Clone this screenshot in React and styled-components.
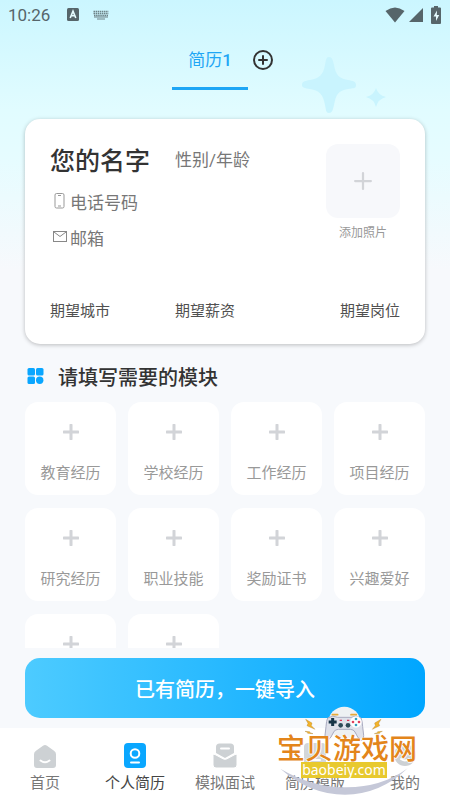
import React, { useState } from 'react';
import styled, { createGlobalStyle } from 'styled-components'

const GlobalStyle = createGlobalStyle`
  * {
    box-sizing: border-box;
  }

  body {
    margin: 0;
    font-family: Roboto, "Noto Sans CJK SC", sans-serif;
    color: #333;
  }

  button {
    padding: 0;
    border: 0;
    background: none;
    font: inherit;
    color: inherit;
    cursor: pointer;
  }

  svg {
    display: block;
    flex: none;
  }
`

const Screen = styled.div`
  position: relative;
  display: flex;
  flex-direction: column;
  height: 100vh;
  overflow: hidden;
  background: #f7f9fc linear-gradient(#cbf6ff 0, #e1fcff 110px, #e6fcff 160px, #f7f9fc 270px) no-repeat;
`

const Sparkles = styled.svg`
  position: absolute;
  top: 57px;
  right: 64px;
`

const StatusBar = styled.div`
  display: flex;
  align-items: center;
  height: 30px;
  padding: 0 8px;
  color: #56656a;
`

const Clock = styled.time`
  margin-right: 17px;
  font-size: 17px;
  line-height: 30px;
`

const StatusIcons = styled.div`
  display: flex;
  align-items: center;
  gap: ${props => props.$gap}px;
  margin-left: ${props => props.$end ? 'auto' : 0};
`

const Tabs = styled.header`
  position: relative;
  display: flex;
  justify-content: center;
  height: 60px;
`

const Tab = styled.button`
  width: 76px;
  border-bottom: 3px solid #1ea6f5;
  color: #1ea6f5;
  font-size: 17px;

  b {
    font-weight: 500;
  }
`

const AddTab = styled.button`
  display: flex;
  align-items: center;
  padding: 0 4px;
  color: #333;
`

const Content = styled.main`
  position: relative;
  flex: 1;
  min-height: 0;
  overflow: hidden;
  padding: 29px 25px 0;
`

const Card = styled.section`
  display: flex;
  flex-direction: column;
  justify-content: space-between;
  min-height: 225px;
  padding: 25px 25px 23px;
  border-radius: 15px;
  background: #fff;
  box-shadow: 0 1px 4px rgba(0, 0, 0, 0.25);
`

const CardTop = styled.div`
  display: flex;
  justify-content: space-between;
`

const NameRow = styled.div`
  display: flex;
  align-items: flex-start;
  height: 39px;
`

const Name = styled.h1`
  width: 125px;
  margin: 0;
  font-size: 25px;
  font-weight: 500;
  line-height: 36px;
`

const Muted = styled.span`
  color: #777;
  font-size: 17px;
  line-height: 32px;
`

const Contact = styled.div`
  display: flex;
  align-items: center;
  gap: 3px;
  height: 36px;
  color: #777;
  font-size: 17px;
`

const PhotoButton = styled.button`
  display: flex;
  flex-direction: column;
  align-items: center;
  gap: 6px;
  width: 74px;
  color: #999;
  font-size: 12px;
  line-height: 18px;
`

const PhotoBox = styled.span`
  display: grid;
  place-items: center;
  width: 100%;
  height: 74px;
  border-radius: 12px;
  background: #f7f8fb;
`

const Wishes = styled.div`
  display: flex;
  color: #505050;
  font-size: 15px;
  line-height: 20px;

  span {
    width: 125px;
  }

  span:last-child {
    width: auto;
    margin-left: auto;
  }
`

const SectionTitle = styled.h2`
  display: flex;
  align-items: center;
  gap: 14px;
  height: 58px;
  margin: 0;
  padding: 6px 2px 0;
  font-size: 20px;
  font-weight: 500;
`

const Modules = styled.div`
  display: grid;
  grid-template-columns: repeat(4, 1fr);
  gap: 13px 12px;
`

const Module = styled.button`
  display: flex;
  flex-direction: column;
  align-items: center;
  gap: 22px;
  height: 93px;
  padding-top: 22px;
  border-radius: 13px;
  background: #fff;
  color: #999;
  font-size: 15px;
  line-height: 22px;
`

const ImportButton = styled.button`
  height: 60px;
  margin: 10px 25px;
  border-radius: 15px;
  background: linear-gradient(90deg, #4dcbff, #00a6ff);
  color: #fff;
  font-size: 20px;
  font-weight: 500;
`

const BottomNav = styled.nav`
  display: grid;
  grid-template-columns: repeat(5, 1fr);
  height: 72px;
  padding-top: 14px;
  background: #fff;
`

const NavLink = styled.a`
  display: flex;
  flex-direction: column;
  align-items: center;
  gap: 4px;
  color: ${props => props.$active ? '#444' : '#777'};
  font-size: 15px;
  line-height: 22px;
  text-decoration: none;
`

const Watermark = styled.div`
  position: absolute;
  right: 33px;
  bottom: 4px;
  width: 140px;
  height: 90px;
  pointer-events: none;

  svg {
    position: absolute;
    inset: 0;
  }
`

const SiteName = styled.div`
  position: relative;
  padding-top: 28px;
  color: #e3851b;
  font-size: 28px;
  font-weight: 500;
  line-height: 32px;
  white-space: nowrap;
  text-shadow: 1px 0 #fff, -1px 0 #fff, 0 1px #fff;
`

const SiteUrl = styled.div`
  position: relative;
  width: 86px;
  margin: -4px 0 0 24px;
  background: #e8c92e;
  color: #fff;
  font-family: "Noto Sans", sans-serif;
  font-size: 14px;
  line-height: 16px;
  text-align: center;
`

const modules = [
  '教育经历', '学校经历', '工作经历', '项目经历',
  '研究经历', '职业技能', '奖励证书', '兴趣爱好',
  '', '',
]

function Plus({ size = 16, width = 3 }) {
  return (
    <svg width={size} height={size} viewBox="0 0 16 16" stroke="#d2d4d8" strokeWidth={width} strokeLinecap="round">
      <path d="M8 1v14M1 8h14" />
    </svg>
  )
}

function HomeIcon() {
  return (
    <svg width="24" height="26" viewBox="0 0 24 26">
      <path d="M10 3.800q2-1.400 4 0l7 5q2 1.400 2 3.400V23q0 3-3 3H4q-3 0-3-3V12.200q0-2 2-3.400z" fill="#cdd1d4" />
      <path d="M7.500 18.500q4.500 3.500 9 0" fill="none" stroke="#fff" strokeWidth="2" strokeLinecap="round" />
    </svg>
  )
}

function ResumeIcon() {
  return (
    <svg width="24" height="26" viewBox="0 0 24 26">
      <rect x="1" y="1" width="22" height="25" rx="4" fill="#0aa7ff" />
      <circle cx="12" cy="11.500" r="4.300" fill="none" stroke="#fff" strokeWidth="2" />
      <path d="M8 20.500h8" stroke="#fff" strokeWidth="2" strokeLinecap="round" />
    </svg>
  )
}

function InterviewIcon() {
  return (
    <svg width="24" height="26" viewBox="0 0 24 26" fill="#cdd1d4">
      <path d="M3 11V5q0-3.500 3.500-3.500h11Q21 1.500 21 5v6l-9 5z" />
      <path d="M0 13.500q0-2 2-1l8 4.300q2 1 4 0l8-4.300q2-1 2 1V23q0 3-3 3H3q-3 0-3-3z" stroke="#fff" strokeWidth="1" />
      <path d="M8 6.500h8" stroke="#fff" strokeWidth="2" strokeLinecap="round" />
    </svg>
  )
}

function TemplateIcon() {
  return (
    <svg width="24" height="26" viewBox="0 0 24 26">
      <rect x="1" y="1" width="22" height="24" rx="4" fill="#d3d6d9" />
      <path d="M7 18h10" stroke="#fff" strokeWidth="2" strokeLinecap="round" />
    </svg>
  )
}

function MineIcon() {
  return (
    <svg width="24" height="26" viewBox="0 0 24 26">
      <circle cx="12" cy="13" r="11" fill="#cdd1d4" />
      <path d="M8 17q4 3 8 0" fill="none" stroke="#fff" strokeWidth="2" strokeLinecap="round" />
    </svg>
  )
}

const navItems = [
  { label: '首页', icon: HomeIcon },
  { label: '个人简历', icon: ResumeIcon },
  { label: '模拟面试', icon: InterviewIcon },
  { label: '简历模版', icon: TemplateIcon },
  { label: '我的', icon: MineIcon },
]

function Status() {
  return (
    <StatusBar>
      <Clock>10:26</Clock>
      <StatusIcons $gap={14}>
        <svg width="12" height="14" viewBox="0 0 12 14">
          <rect width="12" height="13" rx="1.500" fill="currentColor" />
          <path d="M3.200 10L6 3.200 8.800 10M4.300 7.800h3.400" fill="none" stroke="#e6fcff" strokeWidth="1.600" />
        </svg>
        <svg width="16" height="10" viewBox="0 0 16 10" stroke="currentColor" fill="none" opacity="0.8">
          <path d="M0.500 1.500h15M0.500 3.500h15M1 5.500h14" strokeWidth="1.500" strokeDasharray="1.500 0.600" />
          <path d="M1 7h14M4 9h8" strokeWidth="1" />
        </svg>
      </StatusIcons>
      <StatusIcons $gap={4} $end>
        <svg width="20" height="16" viewBox="0 0 20 16" fill="currentColor">
          <path d="M0.500 4Q10-3 19.500 4L10 15.500z" />
        </svg>
        <svg width="14" height="14" viewBox="0 0 14 14" fill="currentColor">
          <path d="M14 0v14H0z" />
        </svg>
        <svg width="15" height="18" viewBox="-4 0 15 18">
          <path d="M3 1.500V0h4v1.500h2q1 0 1 1V17q0 1-1 1H1q-1 0-1-1V2.500q0-1 1-1z" fill="currentColor" />
          <path d="M6 4.500L2.500 10.500H5V15l3.200-6H5.800z" fill="#e6fcff" />
        </svg>
      </StatusIcons>
    </StatusBar>
  )
}

function Gamepad() {
  return (
    <svg width="140" height="90" viewBox="36 18 420 270">
      <path d="M46 206Q135 284 240 284T428 205Q350 262 245 262T46 206z" fill="#c5c8d8" />
      <circle cx="238" cy="68" r="48" fill="#eef1f3" />
      <path d="M202 44h16M258 44h16" stroke="#e5a93a" strokeWidth="5" strokeLinecap="round" />
      <path d="M188 54Q204 44 218 52H258Q272 44 288 54Q292 62 293 80L296 106Q296 124 286 120Q278 114 270 96Q266 88 256 88H220Q210 88 206 96Q198 114 190 120Q180 124 180 106L183 80Q184 62 188 54z" fill="#dfe1ea" stroke="#a9abc0" strokeWidth="3" />
      <path d="M203 54v24M191 66h24" stroke="#163447" strokeWidth="9" />
      <circle cx="227" cy="76" r="7" fill="#2c4a58" />
      <circle cx="249" cy="76" r="7" fill="#2c4a58" />
      <path d="M224 61h7M246 61h7" stroke="#dc3656" strokeWidth="4" />
      <circle cx="273" cy="66" r="17" fill="#fff" />
      <circle cx="273" cy="57" r="4" fill="#34a0bf" />
      <circle cx="264" cy="66" r="4" fill="#e0405c" />
      <circle cx="282" cy="66" r="4" fill="#e0405c" />
      <circle cx="273" cy="75" r="4" fill="#34a0bf" />
      <g fill="#f3b32a" stroke="#a57725">
        <path d="M122 58l19 11-2 8 11 11-24-11 3-7z" />
        <path d="M348 58l-19 11 2 8-9 11 22-11-3-7z" />
        <path d="M120 94l14 1 1 3 9 3-16-1-1-3z" />
        <path d="M352 94l-14 1-1 3-9 3 16-1 1-3z" />
      </g>
    </svg>
  )
}

export default function App() {
  const [active, setActive] = useState(1)

  return (
    <Screen>
      <GlobalStyle />
      <Sparkles width="86" height="56" viewBox="0 0 86 56" fill="#c9f4fe" aria-hidden="true">
        <path d="M2 28C2 24 5 24 10 23C20 21 23 18 25 8C26 3 26 0 29 0S33 3 34 8C36 18 38 21 48 23C53 24 56 24 56 28S53 31 48 32C38 34 36 37 34 48C33 53 32 56 29 56S26 53 25 48C23 37 20 34 10 32C5 31 2 31 2 28z" />
        <path d="M76 31Q78 38 86 40Q78 42 76 50Q74 42 66 40Q74 38 76 31z" />
      </Sparkles>
      <Status />
      <Tabs>
        <Tab>简历<b>1</b></Tab>
        <AddTab aria-label="新建简历">
          <svg width="22" height="22" viewBox="0 0 22 22" fill="none" stroke="currentColor" strokeWidth="2">
            <circle cx="11" cy="11" r="9" />
            <path d="M11 7v8M7 11h8" strokeLinecap="round" />
          </svg>
        </AddTab>
      </Tabs>
      <Content>
        <Card>
          <CardTop>
            <div>
              <NameRow>
                <Name>您的名字</Name>
                <Muted>性别/年龄</Muted>
              </NameRow>
              <Contact>
                <svg width="17" height="18" viewBox="0 0 17 18" fill="none" stroke="#999">
                  <rect x="5" y="1.500" width="9" height="14.500" rx="1.500" />
                  <path d="M8 3.500h3M8 14h3" />
                </svg>
                电话号码
              </Contact>
              <Contact>
                <svg width="17" height="14" viewBox="0 0 17 14" fill="none" stroke="#888">
                  <rect x="3.500" y="1.500" width="13" height="10" />
                  <path d="M4 2l6 4.500L16 2" />
                </svg>
                邮箱
              </Contact>
            </div>
            <PhotoButton>
              <PhotoBox><Plus size={18} width={2} /></PhotoBox>
              添加照片
            </PhotoButton>
          </CardTop>
          <Wishes>
            <span>期望城市</span>
            <span>期望薪资</span>
            <span>期望岗位</span>
          </Wishes>
        </Card>
        <SectionTitle>
          <svg width="17" height="16" viewBox="0 0 17 16" fill="#09a6ff">
            <rect x="0.500" width="7.500" height="7.500" rx="1.500" />
            <rect x="9" width="7.500" height="7.500" rx="1.500" />
            <rect x="0.500" y="8.500" width="7.500" height="7.500" rx="1.500" />
            <circle cx="12.700" cy="12.200" r="3.700" />
          </svg>
          请填写需要的模块
        </SectionTitle>
        <Modules>
          {modules.map((label, i) => (
            <Module key={i}>
              <Plus />
              {label}
            </Module>
          ))}
        </Modules>
      </Content>
      <ImportButton>已有简历，一键导入</ImportButton>
      <BottomNav>
        {navItems.map(({ label, icon: Icon }, i) => (
          <NavLink key={label} href="#" $active={i === active} onClick={() => setActive(i)}>
            <Icon />
            {label}
          </NavLink>
        ))}
      </BottomNav>
      <Watermark>
        <Gamepad />
        <SiteName>宝贝游戏网</SiteName>
        <SiteUrl>baobeiy.com</SiteUrl>
      </Watermark>
    </Screen>
  )
}
